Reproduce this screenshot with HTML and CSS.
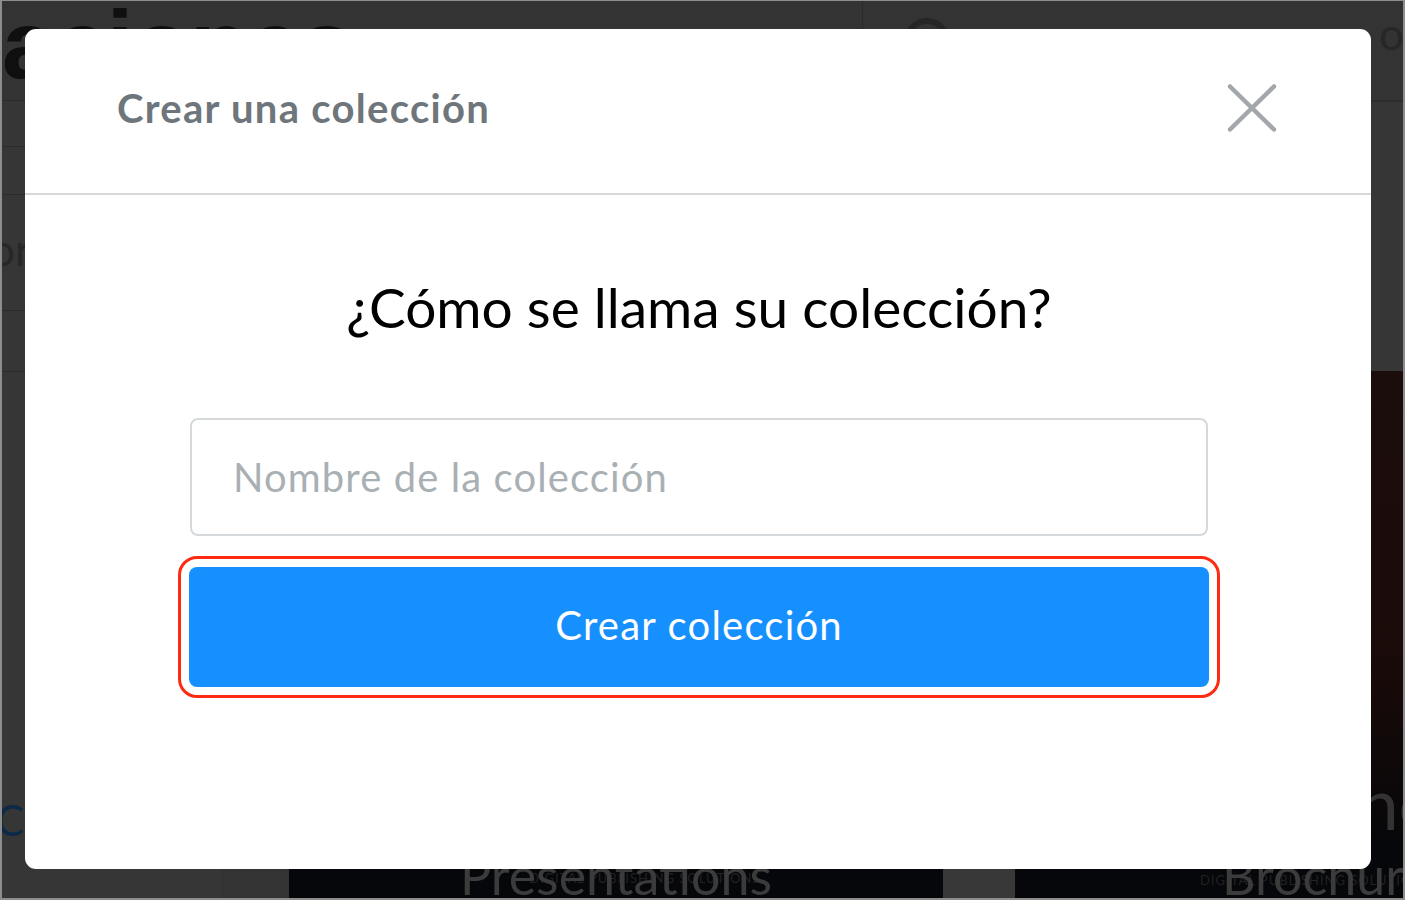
FILE: index.html
```html
<!DOCTYPE html>
<html lang="es">
<head>
<meta charset="utf-8">
<title>Crear una colección</title>
<link rel="stylesheet" href="styles.css">
</head>
<body>
<div class="frame">
  <header class="site-header">
    <div class="brand"><span class="brand-text">aciones</span></div>
    <div class="search">
      <svg class="search-icon" width="60" height="60" viewBox="0 0 60 60"><circle cx="26" cy="26" r="20" fill="none" stroke="#262626" stroke-width="6"/><line x1="41" y1="41" x2="56" y2="56" stroke="#262626" stroke-width="6"/></svg>
      <span class="search-text">Publicaciones, libros</span>
      <span class="search-end">o</span>
    </div>
  </header>
  <div class="page-body">
    <aside class="sidebar">
      <div class="side-row side-row-a"></div>
      <div class="side-row side-row-b"></div>
      <div class="side-row side-row-c"><span class="side-text">or</span></div>
      <div class="side-row side-row-d"></div>
      <div class="side-fill"><span class="side-link">C</span></div>
    </aside>
    <main class="main">
      <div class="main-top"></div>
      <div class="hero"><span class="hero-text">nc</span></div>
      <div class="tiles">
        <div class="tile-gap"></div>
        <div class="tile tile-wide"><span class="tile-sub">DIGITAL PUBLISHING SOLUTIONS</span><span class="tile-title">Presentations</span></div>
        <div class="tile-gap2"></div>
        <div class="tile tile-right"><span class="tile-sub small">DIGITAL PUBLISHING SOLUTIONS</span><span class="tile-title">Brochures</span></div>
      </div>
    </main>
  </div>

  <div class="modal" role="dialog" aria-labelledby="modal-title">
    <div class="modal-header">
      <h2 class="modal-title" id="modal-title">Crear una colección</h2>
      <button class="close-btn" aria-label="Cerrar">
        <svg width="50" height="48" viewBox="0 0 50 48"><path d="M3 2.5 L47 45.5 M47 2.5 L3 45.5" fill="none" stroke="#a3a7ab" stroke-width="4.5" stroke-linecap="round"/></svg>
      </button>
    </div>
    <div class="modal-body">
      <p class="question">¿Cómo se llama su colección?</p>
      <form class="form">
        <input class="name-input" type="text" placeholder="Nombre de la colección">
        <button class="create-btn" type="button">Crear colección</button>
      </form>
    </div>
  </div>
</div>
</body>
</html>
```

FILE: styles.css
```css
* { box-sizing: border-box; }
html, body { margin: 0; padding: 0; }
body {
  width: 1405px;
  height: 900px;
  overflow: hidden;
  background: #333333;
  font-family: Lato, "Liberation Sans", sans-serif;
}
.frame {
  position: relative;
  width: 1405px;
  height: 900px;
  border: 2px solid #8d8d8d;
  border-top-width: 1px;
  overflow: hidden;
  background: #333333;
}

/* dimmed background page */
.site-header {
  display: flex;
  height: 100px;
  border-bottom: 1px solid #2c2c2c;
}
.brand {
  width: 861px;
  flex: none;
  border-right: 1px solid #2a2a2a;
  overflow: hidden;
}
.brand-text {
  display: block;
  font-family: "Liberation Sans", Arial, sans-serif;
  font-weight: 700;
  font-size: 96px;
  line-height: 1;
  color: #0f0f0f;
  margin-top: -4px;
  letter-spacing: -1px;
}
.search {
  flex: 1;
  display: flex;
  align-items: flex-start;
  padding: 14px 0 0 38px;
  gap: 44px;
  overflow: hidden;
}
.search-icon { flex: none; }
.search-text {
  font-family: Lato, sans-serif;
  font-size: 44px;
  color: #2a2a2a;
  line-height: 1;
  margin-top: 14px;
  white-space: nowrap;
  width: 330px;
  overflow: hidden;
  flex: none;
}
.search-end {
  font-size: 44px;
  color: #262626;
  line-height: 1;
  margin-top: -4px;
}
.page-body {
  display: flex;
  height: 797px;
}
.sidebar {
  width: 219px;
  flex: none;
  display: flex;
  flex-direction: column;
  background: #363636;
}
.side-row { border-bottom: 1px solid #2b2b2b; }
.side-row-a { height: 46px; }
.side-row-b { height: 48px; }
.side-row-c {
  height: 116px;
  display: flex;
  align-items: center;
}
.side-text {
  font-size: 44px;
  color: #272727;
  margin-left: -12px;
  margin-top: -8px;
}
.side-row-d { height: 61px; }
.side-fill {
  flex: 1;
  display: flex;
  flex-direction: column;
  justify-content: flex-end;
  padding-bottom: 53px;
}
.side-link {
  font-size: 42px;
  color: #0c2a48;
  margin-left: -6px;
}
.main {
  flex: 1;
  min-width: 0;
  display: flex;
  flex-direction: column;
}
.main-top {
  height: 270px;
  background: #363636;
  border-top: 1px solid #2e2e2e;
}
.hero {
  height: 467px;
  background: linear-gradient(180deg, #1b0d0b 0%, #1a0b09 60%, #070709 100%);
  display: flex;
  justify-content: flex-end;
  align-items: flex-end;
  overflow: hidden;
}
.hero-text {
  font-size: 72px;
  color: #333333;
  line-height: 1;
  margin-right: -30px;
}
.tiles {
  display: flex;
  height: 60px;
  background: #353535;
}
.tile-gap { flex: none; width: 68px; background: #333; }
.tile-gap2 { flex: none; width: 72px; background: #383838; }
.tile {
  position: relative;
  background: #05070a;
  overflow: hidden;
  display: flex;
  justify-content: center;
}
.tile-wide { flex: none; width: 654px; }
.tile-right { flex: 1; min-width: 0; justify-content: flex-start; padding-left: 207px; }
.tile-title {
  position: relative;
  font-family: Lato, sans-serif;
  font-size: 52px;
  color: #3b3b3b;
  line-height: 1;
  margin-top: 11px;
  white-space: nowrap;
}
.tile-sub {
  position: absolute;
  left: 240px;
  top: 32px;
  font-size: 13px;
  color: #222222;
  letter-spacing: 1px;
  white-space: nowrap;
}
.tile-sub.small { left: 185px; top: 34px; }

/* modal */
.modal {
  position: absolute;
  left: 23px;
  top: 28px;
  width: 1346px;
  height: 840px;
  background: #ffffff;
  border-radius: 11px;
  display: flex;
  flex-direction: column;
}
.modal-header {
  height: 166px;
  border-bottom: 2px solid #d4d8db;
  display: flex;
  align-items: center;
  justify-content: space-between;
  padding: 0 94px 6px 92px;
}
.modal-title {
  margin: 0;
  font-family: Lato, sans-serif;
  font-weight: 700;
  font-size: 40px;
  color: #6e767c;
  letter-spacing: 1.3px;
}
.close-btn {
  border: 0;
  background: none;
  padding: 0;
  width: 50px;
  height: 48px;
  cursor: pointer;
  display: block;
}
.close-btn svg { display: block; }
.modal-body {
  display: flex;
  flex-direction: column;
  align-items: center;
  padding-top: 80px;
  padding-left: 2px;
}
.question {
  margin: 0;
  font-family: Lato, sans-serif;
  font-weight: 400;
  font-size: 55px;
  line-height: 64px;
  color: #000000;
  letter-spacing: 0;
}
.form {
  margin-top: 79px;
  width: 1020px;
  display: flex;
  flex-direction: column;
  gap: 31px;
}
.name-input {
  width: 1018px;
  margin-left: 1px;
  height: 118px;
  border: 2px solid #d5d9dc;
  border-radius: 8px;
  padding: 0 0 0 41px;
  font-family: Lato, sans-serif;
  font-size: 40px;
  letter-spacing: 1.1px;
  color: #333;
  outline: none;
}
.name-input::placeholder { color: #a9b0b4; }
.create-btn {
  width: 1020px;
  height: 120px;
  border: 0;
  border-radius: 8px;
  background: #1790ff;
  color: #ffffff;
  font-family: Lato, sans-serif;
  font-size: 40px;
  font-weight: 400;
  letter-spacing: 1.2px;
  padding: 0 0 4px;
  outline: 3px solid #ff2a12;
  outline-offset: 8px;
  cursor: pointer;
}
```
